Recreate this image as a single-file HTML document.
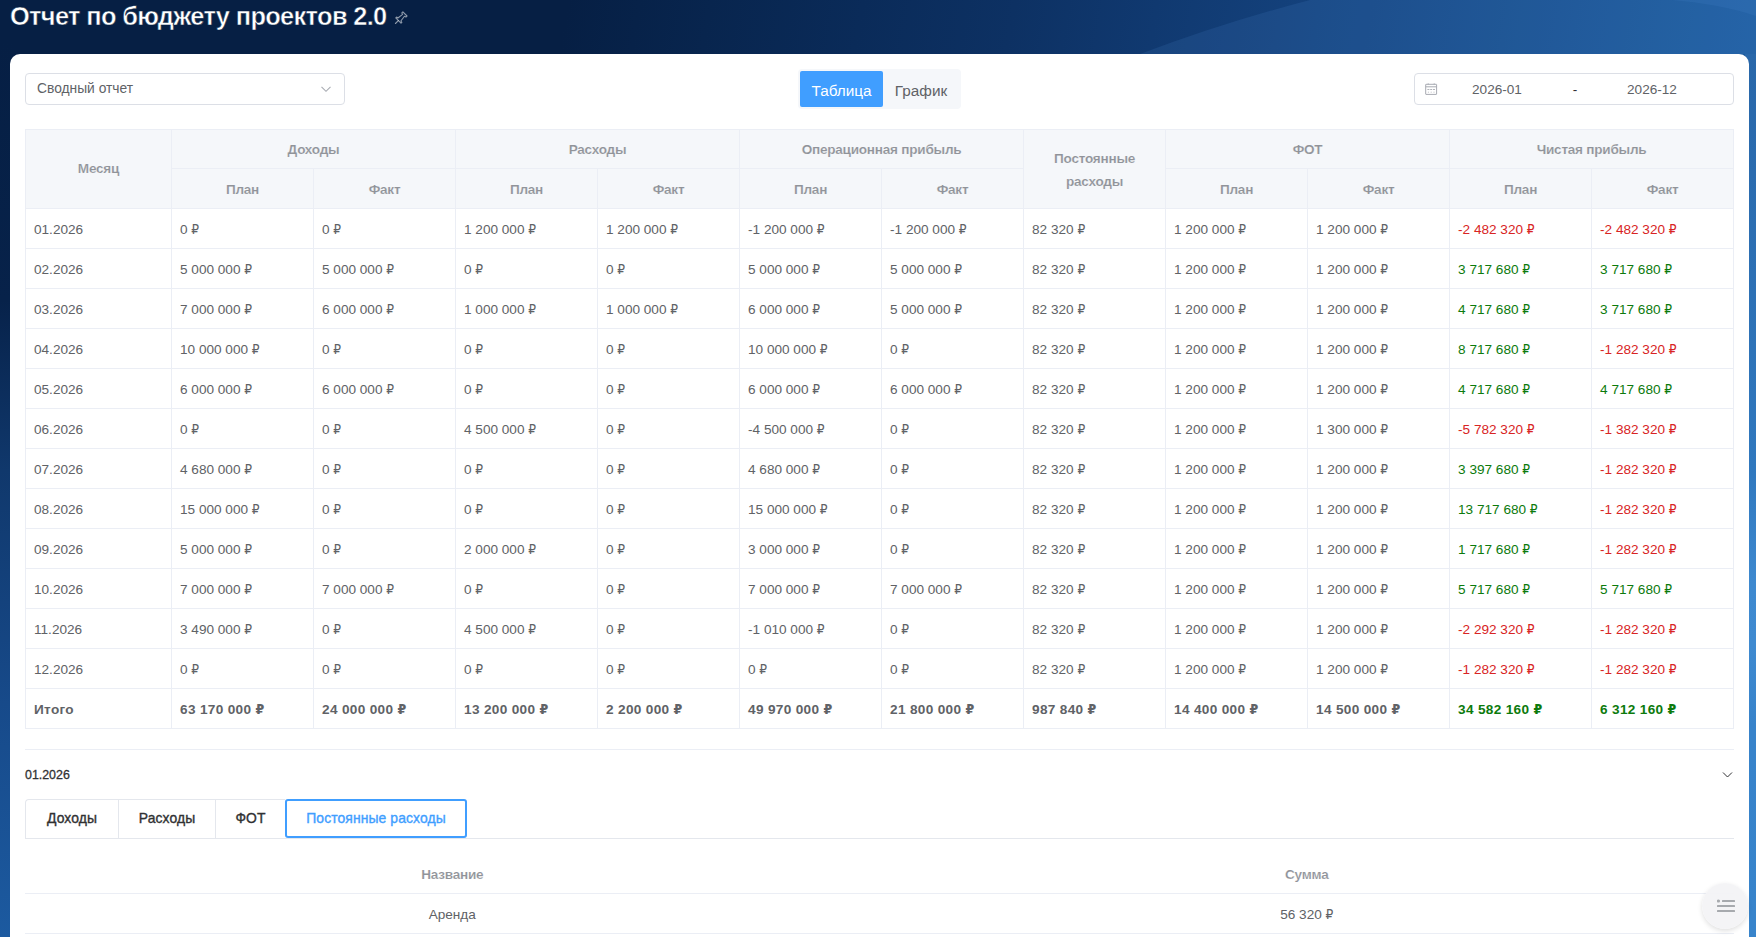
<!DOCTYPE html>
<html lang="ru">
<head>
<meta charset="utf-8">
<title>Отчет по бюджету проектов 2.0</title>
<style>
*{box-sizing:border-box}
html,body{margin:0;padding:0}
body{width:1756px;height:937px;overflow:hidden;position:relative;font-family:"Liberation Sans","DejaVu Sans",sans-serif;font-size:14px;color:#606266;
background:#0b2a58}
.bg{position:absolute;left:0;top:0;width:1756px;height:937px;
background:linear-gradient(100deg,#061f44 0,#061f44 560px,#08254e 700px,#0a2b59 850px,#0d3163 1000px,#103970 1140px,#14427d 1300px,#1d5c9e 1740px)}
.bgl{position:absolute;left:0;top:40px;width:14px;height:897px;background:linear-gradient(to bottom,#061f44 0,#07224a 29%,#10386c 48%,#174a8a 74%,#1c5aa0 100%)}
.bgr{position:absolute;left:1745px;top:54px;width:11px;height:883px;background:linear-gradient(to bottom,#2967a9 0,#3078be 47%,#3e89cf 60%,#3f8ad0 67%,#3883ca 76%,#3884cb 100%)}
.wave{position:absolute;left:0;top:0}
h1{position:absolute;left:10px;top:-1px;margin:0;font-size:25.4px;line-height:34px;font-weight:bold;color:#fff;white-space:nowrap;letter-spacing:-0.66px;-webkit-text-stroke:0.5px #061f44}
.pin{position:absolute;left:388px;top:4px}
.card{position:absolute;left:10px;top:54px;width:1739px;height:900px;background:#fff;border-radius:10px 10px 0 0}
.abs{position:absolute}
.select{left:25px;top:73px;width:320px;height:32px;border:1px solid #dcdfe6;border-radius:4px;background:#fff;line-height:30px;padding-left:11px;color:#606266;font-size:13.8px}
.select svg{position:absolute;left:294px;top:9px}
.seg{left:798px;top:69px;width:163px;height:40px;background:#f5f7fa;border-radius:4px;font-size:15.3px;line-height:39px;color:#606266}
.seg .on{position:absolute;left:2px;top:2px;width:83px;height:36px;background:#409eff;color:#fff;border-radius:2px;text-align:center}
.seg .off{position:absolute;left:85px;top:2px;width:76px;height:36px;text-align:center}
.date{left:1414px;top:73px;width:320px;height:32px;border:1px solid #dcdfe6;border-radius:4px;background:#fff;line-height:31px;color:#606266;font-size:13.6px}
.date svg{position:absolute;left:10px;top:9px}
.date span{position:absolute;top:0;text-align:center}
.date .d1{left:27px;width:110px}
.date .sep{left:150px;width:20px;color:#303133}
.date .d2{left:182px;width:110px}
table.main{position:absolute;left:25px;top:129px;border-collapse:separate;border-spacing:0;border-top:1px solid #ebeef5;border-left:1px solid #ebeef5;table-layout:fixed;width:1709px}
table.main th,table.main td{border-right:1px solid #ebeef5;border-bottom:1px solid #ebeef5;height:40px;padding:1px 0 0 8px;line-height:23px;font-size:13.6px;white-space:nowrap;overflow:hidden;text-align:left;font-weight:normal;color:#606266}
table.main th{background:#f5f7fa;color:#909399;font-weight:bold;text-align:center;padding:1px 0 0 0;white-space:normal;letter-spacing:-0.25px;-webkit-text-stroke:0.15px #f5f7fa}
table.main tr.h1 th{height:39px}
table.main tr.h1 th:first-child{padding:0 0 1px 0}
table.main td.neg{color:#d82424}
table.main td.pos{color:#0c7a0c}
table.main tr.total td{font-weight:bold;letter-spacing:0.33px}
table.main tr.total .rub{font-size:14px;letter-spacing:0}
.rub{font-family:"DejaVu Sans Condensed","DejaVu Sans",sans-serif;font-size:13.6px}
.divider{left:25px;top:749px;width:1709px;height:1px;background:#ebeef5}
.ctitle{left:25px;top:763px;font-size:12.4px;line-height:24px;color:#303133;-webkit-text-stroke:0.3px #303133}
.chev{left:1722px;top:770.6px}
.tabs{left:25px;top:799px;height:39px;width:442px;font-size:13.9px;color:#303133;-webkit-text-stroke:0.35px #303133}
.tabs div{position:absolute;top:0;height:39px;border-left:1px solid #e4e7ed;border-top:1px solid #e4e7ed;text-align:center;line-height:36px;letter-spacing:0.1px}
.tabs div:first-child{border-top-left-radius:4px}
.tabs .act{color:#409eff;-webkit-text-stroke:0.35px #409eff;border:none;box-shadow:0 0 0 2px #409eff inset;border-radius:3px;line-height:38px}
.tline{left:25px;top:838px;width:1709px;height:1px;background:#e4e7ed}
table.sub{position:absolute;left:25px;top:854px;width:1709px;border-collapse:separate;border-spacing:0;table-layout:fixed}
table.sub th,table.sub td{height:40px;border-bottom:1px solid #ebeef5;text-align:center;font-size:13.6px;line-height:23px;padding:1px 0 0 0;color:#606266;font-weight:normal}
table.sub th{color:#909399;font-weight:bold;letter-spacing:-0.25px;-webkit-text-stroke:0.15px #fff}
.fab{left:1702px;top:883px;width:46px;height:46px;border-radius:50%;background:rgba(243,243,245,.93);box-shadow:0 2px 5px rgba(0,0,0,.13)}
.fab svg{position:absolute;left:15px;top:15.7px}

</style>
</head>
<body>
<div class="bg"></div>
<svg class="wave" width="1756" height="54" viewBox="0 0 1756 54"><path d="M1140 54 Q1225 22 1310 0 L1756 0 L1756 54 Z" fill="#6db4ff" fill-opacity="0.10"/><path d="M1672 0 Q1720 4 1756 16 L1756 0 Z" fill="#6db4ff" fill-opacity="0.08"/></svg>
<div class="bgl"></div>
<div class="bgr"></div>
<h1>Отчет по бюджету проектов 2.0</h1>
<svg class="pin" width="28" height="28" viewBox="0 0 28 28" fill="none" stroke="#ffffff" stroke-opacity="0.55" stroke-width="1.1" stroke-linejoin="round" stroke-linecap="round"><g transform="translate(7.2 19.7) rotate(-45)"><path d="M0.3 0 L4.4 0"/><path d="M4.5 -3.7 L4.5 3.7 L5.7 3.7 L5.9 2.1 L11.8 1.3 L12.3 2.9 L13.8 2.9 L13.8 -2.9 L12.3 -2.9 L11.8 -1.3 L5.9 -2.1 L5.7 -3.7 Z"/></g></svg>
<div class="card"></div>

<div class="abs select">Сводный отчет<svg width="12" height="12" viewBox="0 0 12 12" fill="none" stroke="#a8abb2" stroke-width="1.1"><path d="M1.5 3.8 L6 8.3 L10.5 3.8"/></svg></div>

<div class="abs seg"><div class="on">Таблица</div><div class="off">График</div></div>

<div class="abs date"><svg width="14" height="14" viewBox="0 0 14 14" fill="none" stroke="#a8abb2" stroke-width="1"><rect x="0.7" y="1.3" width="10.9" height="10.1" rx="0.3"/><path d="M0.7 3.8 H11.6 M3.2 0.4 V1.6 M9.2 0.4 V1.6"/><path d="M2.4 6.5 H4.4 M5.2 6.5 H7.2 M8 6.5 H10" stroke-width="0.9"/><path d="M2.9 9.2 H3.9 M5.7 9.2 H6.7 M8.5 9.2 H9.5" stroke-width="0.9" stroke-opacity="0.85"/></svg><span class="d1">2026-01</span><span class="sep">-</span><span class="d2">2026-12</span></div>

<table class="main">
<colgroup><col style="width:146px"><col style="width:142px"><col style="width:142px"><col style="width:142px"><col style="width:142px"><col style="width:142px"><col style="width:142px"><col style="width:142px"><col style="width:142px"><col style="width:142px"><col style="width:142px"><col style="width:142px"></colgroup>
<thead>
<tr class="h1"><th rowspan="2">Месяц</th><th colspan="2">Доходы</th><th colspan="2">Расходы</th><th colspan="2">Операционная прибыль</th><th rowspan="2">Постоянные<br>расходы</th><th colspan="2">ФОТ</th><th colspan="2">Чистая прибыль</th></tr>
<tr class="h2"><th>План</th><th>Факт</th><th>План</th><th>Факт</th><th>План</th><th>Факт</th><th>План</th><th>Факт</th><th>План</th><th>Факт</th></tr>
</thead>
<tbody>
<tr><td>01.2026</td><td>0 <span class="rub">₽</span></td><td>0 <span class="rub">₽</span></td><td>1 200 000 <span class="rub">₽</span></td><td>1 200 000 <span class="rub">₽</span></td><td>-1 200 000 <span class="rub">₽</span></td><td>-1 200 000 <span class="rub">₽</span></td><td>82 320 <span class="rub">₽</span></td><td>1 200 000 <span class="rub">₽</span></td><td>1 200 000 <span class="rub">₽</span></td><td class="neg">-2 482 320 <span class="rub">₽</span></td><td class="neg">-2 482 320 <span class="rub">₽</span></td></tr>
<tr><td>02.2026</td><td>5 000 000 <span class="rub">₽</span></td><td>5 000 000 <span class="rub">₽</span></td><td>0 <span class="rub">₽</span></td><td>0 <span class="rub">₽</span></td><td>5 000 000 <span class="rub">₽</span></td><td>5 000 000 <span class="rub">₽</span></td><td>82 320 <span class="rub">₽</span></td><td>1 200 000 <span class="rub">₽</span></td><td>1 200 000 <span class="rub">₽</span></td><td class="pos">3 717 680 <span class="rub">₽</span></td><td class="pos">3 717 680 <span class="rub">₽</span></td></tr>
<tr><td>03.2026</td><td>7 000 000 <span class="rub">₽</span></td><td>6 000 000 <span class="rub">₽</span></td><td>1 000 000 <span class="rub">₽</span></td><td>1 000 000 <span class="rub">₽</span></td><td>6 000 000 <span class="rub">₽</span></td><td>5 000 000 <span class="rub">₽</span></td><td>82 320 <span class="rub">₽</span></td><td>1 200 000 <span class="rub">₽</span></td><td>1 200 000 <span class="rub">₽</span></td><td class="pos">4 717 680 <span class="rub">₽</span></td><td class="pos">3 717 680 <span class="rub">₽</span></td></tr>
<tr><td>04.2026</td><td>10 000 000 <span class="rub">₽</span></td><td>0 <span class="rub">₽</span></td><td>0 <span class="rub">₽</span></td><td>0 <span class="rub">₽</span></td><td>10 000 000 <span class="rub">₽</span></td><td>0 <span class="rub">₽</span></td><td>82 320 <span class="rub">₽</span></td><td>1 200 000 <span class="rub">₽</span></td><td>1 200 000 <span class="rub">₽</span></td><td class="pos">8 717 680 <span class="rub">₽</span></td><td class="neg">-1 282 320 <span class="rub">₽</span></td></tr>
<tr><td>05.2026</td><td>6 000 000 <span class="rub">₽</span></td><td>6 000 000 <span class="rub">₽</span></td><td>0 <span class="rub">₽</span></td><td>0 <span class="rub">₽</span></td><td>6 000 000 <span class="rub">₽</span></td><td>6 000 000 <span class="rub">₽</span></td><td>82 320 <span class="rub">₽</span></td><td>1 200 000 <span class="rub">₽</span></td><td>1 200 000 <span class="rub">₽</span></td><td class="pos">4 717 680 <span class="rub">₽</span></td><td class="pos">4 717 680 <span class="rub">₽</span></td></tr>
<tr><td>06.2026</td><td>0 <span class="rub">₽</span></td><td>0 <span class="rub">₽</span></td><td>4 500 000 <span class="rub">₽</span></td><td>0 <span class="rub">₽</span></td><td>-4 500 000 <span class="rub">₽</span></td><td>0 <span class="rub">₽</span></td><td>82 320 <span class="rub">₽</span></td><td>1 200 000 <span class="rub">₽</span></td><td>1 300 000 <span class="rub">₽</span></td><td class="neg">-5 782 320 <span class="rub">₽</span></td><td class="neg">-1 382 320 <span class="rub">₽</span></td></tr>
<tr><td>07.2026</td><td>4 680 000 <span class="rub">₽</span></td><td>0 <span class="rub">₽</span></td><td>0 <span class="rub">₽</span></td><td>0 <span class="rub">₽</span></td><td>4 680 000 <span class="rub">₽</span></td><td>0 <span class="rub">₽</span></td><td>82 320 <span class="rub">₽</span></td><td>1 200 000 <span class="rub">₽</span></td><td>1 200 000 <span class="rub">₽</span></td><td class="pos">3 397 680 <span class="rub">₽</span></td><td class="neg">-1 282 320 <span class="rub">₽</span></td></tr>
<tr><td>08.2026</td><td>15 000 000 <span class="rub">₽</span></td><td>0 <span class="rub">₽</span></td><td>0 <span class="rub">₽</span></td><td>0 <span class="rub">₽</span></td><td>15 000 000 <span class="rub">₽</span></td><td>0 <span class="rub">₽</span></td><td>82 320 <span class="rub">₽</span></td><td>1 200 000 <span class="rub">₽</span></td><td>1 200 000 <span class="rub">₽</span></td><td class="pos">13 717 680 <span class="rub">₽</span></td><td class="neg">-1 282 320 <span class="rub">₽</span></td></tr>
<tr><td>09.2026</td><td>5 000 000 <span class="rub">₽</span></td><td>0 <span class="rub">₽</span></td><td>2 000 000 <span class="rub">₽</span></td><td>0 <span class="rub">₽</span></td><td>3 000 000 <span class="rub">₽</span></td><td>0 <span class="rub">₽</span></td><td>82 320 <span class="rub">₽</span></td><td>1 200 000 <span class="rub">₽</span></td><td>1 200 000 <span class="rub">₽</span></td><td class="pos">1 717 680 <span class="rub">₽</span></td><td class="neg">-1 282 320 <span class="rub">₽</span></td></tr>
<tr><td>10.2026</td><td>7 000 000 <span class="rub">₽</span></td><td>7 000 000 <span class="rub">₽</span></td><td>0 <span class="rub">₽</span></td><td>0 <span class="rub">₽</span></td><td>7 000 000 <span class="rub">₽</span></td><td>7 000 000 <span class="rub">₽</span></td><td>82 320 <span class="rub">₽</span></td><td>1 200 000 <span class="rub">₽</span></td><td>1 200 000 <span class="rub">₽</span></td><td class="pos">5 717 680 <span class="rub">₽</span></td><td class="pos">5 717 680 <span class="rub">₽</span></td></tr>
<tr><td>11.2026</td><td>3 490 000 <span class="rub">₽</span></td><td>0 <span class="rub">₽</span></td><td>4 500 000 <span class="rub">₽</span></td><td>0 <span class="rub">₽</span></td><td>-1 010 000 <span class="rub">₽</span></td><td>0 <span class="rub">₽</span></td><td>82 320 <span class="rub">₽</span></td><td>1 200 000 <span class="rub">₽</span></td><td>1 200 000 <span class="rub">₽</span></td><td class="neg">-2 292 320 <span class="rub">₽</span></td><td class="neg">-1 282 320 <span class="rub">₽</span></td></tr>
<tr><td>12.2026</td><td>0 <span class="rub">₽</span></td><td>0 <span class="rub">₽</span></td><td>0 <span class="rub">₽</span></td><td>0 <span class="rub">₽</span></td><td>0 <span class="rub">₽</span></td><td>0 <span class="rub">₽</span></td><td>82 320 <span class="rub">₽</span></td><td>1 200 000 <span class="rub">₽</span></td><td>1 200 000 <span class="rub">₽</span></td><td class="neg">-1 282 320 <span class="rub">₽</span></td><td class="neg">-1 282 320 <span class="rub">₽</span></td></tr>
<tr class="total"><td>Итого</td><td>63 170 000 <span class="rub">₽</span></td><td>24 000 000 <span class="rub">₽</span></td><td>13 200 000 <span class="rub">₽</span></td><td>2 200 000 <span class="rub">₽</span></td><td>49 970 000 <span class="rub">₽</span></td><td>21 800 000 <span class="rub">₽</span></td><td>987 840 <span class="rub">₽</span></td><td>14 400 000 <span class="rub">₽</span></td><td>14 500 000 <span class="rub">₽</span></td><td class="pos">34 582 160 <span class="rub">₽</span></td><td class="pos">6 312 160 <span class="rub">₽</span></td></tr>
</tbody>
</table>

<div class="abs divider"></div>
<div class="abs ctitle">01.2026</div>
<svg class="abs chev" width="11" height="8" viewBox="0 0 11 8" fill="none" stroke="#26272a" stroke-width="0.95"><path d="M1 1.5 L5.5 6 L10 1.5"/></svg>

<div class="abs tabs"><div style="left:0;width:93px">Доходы</div><div style="left:93px;width:97px">Расходы</div><div style="left:190px;width:70px">ФОТ</div><div class="act" style="left:260px;width:182px">Постоянные расходы</div></div>
<div class="abs tline"></div>

<table class="sub">
<thead><tr><th>Название</th><th>Сумма</th></tr></thead>
<tbody><tr><td>Аренда</td><td>56 320 <span class="rub">₽</span></td></tr></tbody>
</table>

<div class="abs fab"><svg width="18" height="14" viewBox="0 0 18 14" fill="#a7aaae"><circle cx="1.5" cy="2" r="1.6"/><rect x="5" y="1" width="13" height="2" rx=".5"/><rect x="0" y="6" width="18" height="2" rx=".5"/><rect x="0" y="11" width="18" height="2" rx=".5"/></svg></div>
</body>
</html>
